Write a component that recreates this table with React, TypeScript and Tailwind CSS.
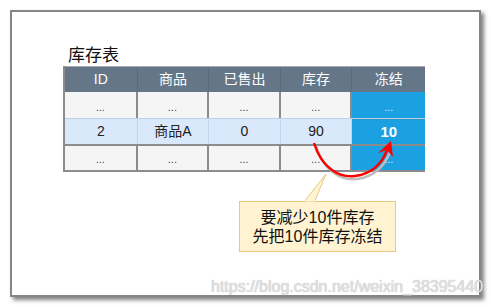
import React from "react";

const cjk = { fontFamily: '"Liberation Sans", "Noto Sans CJK SC", sans-serif' };
const widths = ["w-[73px]", "w-[72px]", "w-[72px]", "w-[72px]", "w-[73px]"];

function DotRow({ top }: { top?: boolean }) {
  return (
    <div className={`flex h-[26px] ${top ? "border-t-2 border-[#8c8c8c]" : ""}`}>
      {[0, 1, 2, 3].map((i) => (
        <div
          key={i}
          className={`${widths[i]} bg-[#f5f5f5] border-r-2 border-[#8c8c8c] flex items-end justify-center pb-[5px] text-[11px] leading-none text-[#444]`}
        >
          ...
        </div>
      ))}
      <div className={`${widths[4]} bg-[#1ba1e2] flex items-end justify-center pb-[5px] text-[11px] leading-none text-[#d8efff]`}>
        ...
      </div>
    </div>
  );
}

export default function App() {
  const headers = ["ID", "商品", "已售出", "库存", "冻结"];
  const row = ["2", "商品A", "0", "90"];
  return (
    <div className="relative w-[491px] h-[307px] bg-white p-[10px]" style={cjk}>
      <div className="w-[471px] h-[287px] border-2 border-[#858585] bg-white shadow-[3px_3px_4px_rgba(0,0,0,0.5)] pt-[33px] pl-[51px]">
        <div className="pl-[5px] text-[17px] leading-[21px] text-[#111]">库存表</div>
        <div className="w-[362px] border-l-2 border-b-2 border-[#8c8c8c]">
          <div className="flex h-[26px] bg-[#647687] border-t border-[#a9a9a9]">
            {headers.map((h, i) => (
              <div
                key={h}
                className={`${widths[i]} ${i < 4 ? "border-r border-[#5a6b7b]" : ""} flex items-center justify-center text-white text-[14px]`}
              >
                {h}
              </div>
            ))}
          </div>
          <DotRow />
          <div className="flex h-[26px] border-t border-[#bcd0e6]">
            {row.map((c, i) => (
              <div
                key={i}
                className={`${widths[i]} bg-[#dae8fc] border-r border-[#c3d5ea] flex items-center justify-center text-[14px] text-[#222]`}
              >
                {c}
              </div>
            ))}
            <div className={`${widths[4]} bg-[#1ba1e2] border-t border-[#2a96cc] flex items-center justify-center text-[15px] font-bold text-white`}>
              10
            </div>
          </div>
          <DotRow top />
        </div>
        <div className="ml-[176px] mt-[29px] w-[157px] h-[51px] bg-[#fff3d2] border border-[#e6cb84] flex flex-col items-center justify-center text-[16px] leading-[19px] text-[#111]">
          <div>要减少10件库存</div>
          <div>先把10件库存冻结</div>
        </div>
      </div>

      <svg className="absolute left-0 top-0 pointer-events-none" width="491" height="307" viewBox="0 0 491 307">
        <polygon points="305,200.5 326,174 315,200.5" fill="#fff3d2" />
        <polyline points="305,200.5 326,174 315,200.5" fill="none" stroke="#e6cb84" strokeWidth="1" />
        <rect x="305.6" y="199.5" width="9" height="2" fill="#fff3d2" />
        <path d="M316,146 C324,172 342,181 357,179 C373,177 384,167 390,152" fill="none" stroke="#bdbdbd" strokeWidth="2.5" />
        <path d="M314,143 C322,169 340,178 355,176 C371,174 382,164 387,150" fill="none" stroke="#ff0000" strokeWidth="2.5" />
        <polygon points="391,141 393,157 387,150 378,153" fill="#ff0000" />
      </svg>

      <div className="absolute left-[211px] top-[277px] text-[16px] leading-[20px] text-[#e2e2e2] whitespace-nowrap" style={{ fontFamily: '"Liberation Sans", sans-serif', textShadow: "0 0 1px #aaa" }}>
        https://blog.csdn.net/weixin_38395440
      </div>
    </div>
  );
}
